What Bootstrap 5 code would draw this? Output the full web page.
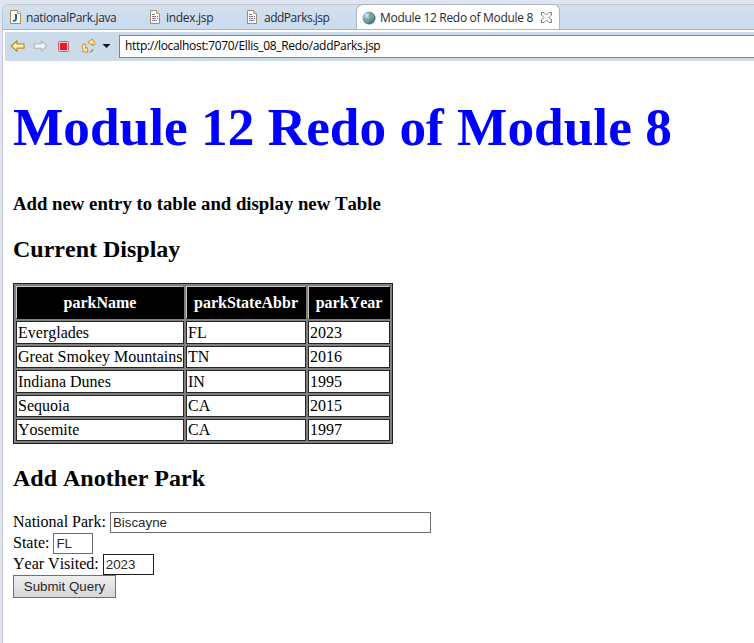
<!DOCTYPE html>
<html lang="en">
<head>
<meta charset="utf-8">
<meta name="viewport" content="width=device-width, initial-scale=1">
<title>Module 12 Redo of Module 8</title>
<link href="https://cdn.jsdelivr.net/npm/bootstrap@5.3.0/dist/css/bootstrap.min.css" rel="stylesheet">
<style>
html, body { height: 100%; }
body { background: #dfe5f3; overflow: hidden; color: #000; padding: 4px 0 0 2px; }
svg { display: block; flex: none; }
.editor { height: 639px; background: #fff; border: solid #c3c6cf; border-width: 1px 0 0 1px; border-top-left-radius: 7px; }
.tabs { height: 25px; background: linear-gradient(#d5e0eb, #cbdcef 60%, #cbdcee); border-bottom: 1px solid #b0b5bd; border-top-left-radius: 6px; font: 12px/24px "Open Sans", "Noto Sans", sans-serif; color: #2b2b33; }
.editor-tab { height: 24px; padding-left: 6px; white-space: nowrap; }
.editor-tab span { padding-top: 2px; }
.editor-tab svg { margin-right: 3px; }
.tab-java { width: 140px; letter-spacing: -.34px; }
.tab-index { width: 97px; letter-spacing: -.3px; }
.tab-add { width: 116px; letter-spacing: -.5px; }
.tab-add svg { margin-right: 4px; }
.tab-active { width: 204px; height: 25px; background: #fff; border: 1px solid #b0b5bd; border-bottom: 0; border-radius: 7px 6px 0 0; margin-top: -1px; padding-left: 5px; letter-spacing: -.31px; color: #1e2a33; }
.tab-active svg { margin-right: 4px; }
.toolbar { height: 29px; margin: 2px 0 0 2px; background: #ccdbea; padding: 0 0 1px 5px; }
.address { height: 23px; background: #fff; border: 1px solid #7b8792; border-right: 0; font: 12px/19px "Open Sans", "Noto Sans", sans-serif; color: #000; padding-left: 5px; letter-spacing: -.32px; white-space: nowrap; }
.page { padding: 37px 0 0 10px; font: 16px/21px "Liberation Serif", "Times New Roman", serif; font-kerning: none; }
.page h1, .page h2, .page h3 { font-weight: 700; margin: 0; white-space: nowrap; }
.page h1 { font-size: 53.3px; line-height: 60px; color: #00f; }
.page h3 { font-size: 18.75px; line-height: 22px; margin-top: 35px; }
.page h2 { font-size: 24px; line-height: 28px; margin-top: 20px; }
.parks { width: 380px; margin-top: 20px; table-layout: fixed; border: 1px solid #202020; border-collapse: separate; border-spacing: 2px; background: #808080; }
.parks th { height: 33px; padding: 0; background: #000; color: #fff; text-align: center; border: 1px solid; border-color: #c8c8c8 #000 #000 #c8c8c8; }
.parks td { height: 22px; padding: 0 0 0 1px; line-height: 20px; background: #fff; border: 1px solid #252525; white-space: nowrap; }
.parks .tall td { height: 23px; line-height: 21px; }
.c-name { width: 168px; } .c-state { width: 120px; } .c-year { width: 82px; }
.entry-form { margin-top: 20px; }
.entry-form label { line-height: 19px; padding-bottom: 2px; }
.field { height: 21px; border: 1px solid #6d6d6d; background: #fff; padding: 0 0 0 2px; font: 13.33px/19px "Liberation Sans", Arial, sans-serif; color: #2a2a2a; border-radius: 0; outline: 0; }
.f-park { width: 321px; } .f-state { width: 40px; } .f-year { width: 51px; border-color: #1c1c1c; }
.submit { width: 103px; height: 23px; border: 1px solid #707070; border-radius: 0; background: linear-gradient(#efefef, #d6d6d6); font: 13.33px/20px "Liberation Sans", Arial, sans-serif; color: #2a2a2a; padding: 0; }
</style>
<script src="https://cdn.jsdelivr.net/npm/bootstrap@5.3.0/dist/js/bootstrap.bundle.min.js"></script>
</head>
<body>
<div class="editor">
  <div class="tabs d-flex overflow-visible">
    <div class="editor-tab tab-java d-flex align-items-center">
      <svg width="14" height="16" viewBox="0 0 14 16"><path d="M1.5 1.5h7l3 3v10h-10z" fill="#f5f9fd" stroke="#a58c50"/><path d="M8.500 1.500v3h3" fill="#ead9a2" stroke="#c3a55a"/><path d="M7 5v5q0 2-3 1.700" fill="none" stroke="#2c5f96" stroke-width="2"/></svg><span>nationalPark.java</span>
    </div>
    <div class="editor-tab tab-index d-flex align-items-center">
      <svg width="14" height="16" viewBox="0 0 14 16"><path d="M1.500 1.500h6l3 3v10h-9z" fill="#fffdf5" stroke="#a58c62"/><path d="M7.500 1.500v3h3" fill="#eadbb2" stroke="#bba36e"/><path d="M3 5.500h3M3 9.500h4M3 11.500h5" stroke="#5c88bd"/><path d="M3 7.500h4" stroke="#c9605d"/><path d="M8 7.500h1M8 9.500h1" stroke="#5c6e9b"/></svg><span>index.jsp</span>
    </div>
    <div class="editor-tab tab-add d-flex align-items-center">
      <svg width="14" height="16" viewBox="0 0 14 16"><path d="M1.500 1.500h6l3 3v10h-9z" fill="#fffdf5" stroke="#a58c62"/><path d="M7.500 1.500v3h3" fill="#eadbb2" stroke="#bba36e"/><path d="M3 5.500h3M3 9.500h4M3 11.500h5" stroke="#5c88bd"/><path d="M3 7.500h4" stroke="#c9605d"/><path d="M8 7.500h1M8 9.500h1" stroke="#5c6e9b"/></svg><span>addParks.jsp</span>
    </div>
    <div class="editor-tab tab-active d-flex align-items-center">
      <svg width="14" height="16" viewBox="0 0 14 16"><defs><radialGradient id="globe" cx=".32" cy=".3" r=".75"><stop offset="0" stop-color="#dcecf0"/><stop offset=".4" stop-color="#7fabc1"/><stop offset="1" stop-color="#336a8c"/></radialGradient></defs><circle cx="7" cy="9" r="6.500" fill="url(#globe)"/><path d="M7 4l3-.5 2.500 3-1 3-3 .500L7 7zM2 10l3-.500 2 2-1 3-2-.500z" fill="#82a66a" opacity=".75"/></svg><span>Module 12 Redo of Module 8</span>
      <svg class="ms-2 me-0" width="11" height="12" viewBox="0 -1 11 12"><path d="M.5.5h2.500L5.500 3 8 .5h2.500V3L8 5.500l2.500 2.500v2.500H8L5.500 8 3 10.500H.5V8L3 5.500.5 3z" fill="#fff" stroke="#6b7076" stroke-width=".9"/></svg>
    </div>
  </div>
  <div class="toolbar d-flex align-items-center">
    <svg width="109" height="20" viewBox="0 0 109 20">
      <path d="M1.300 10L7 4.800v3h7v4.400H7v3z" fill="#fff3b5" stroke="#bd8b24" stroke-width="1.200" stroke-linejoin="round"/>
      <path d="M37 10l-5.700-5.200v3h-7v4.400h7v3z" fill="#edf1f5" stroke="#b3b9be" stroke-width="1.100" stroke-linejoin="round"/>
      <rect x="48.500" y="5.500" width="10" height="10" rx="1" fill="#f7c9cb" stroke="#cf5d65"/><rect x="50" y="7" width="7" height="7" fill="#d91f31"/>
      <path d="M84.800 8.800q1-3.300-2.300-4.500l-.3-1.300-4.400 3.300 4.300 2.800.2-1.600q1 .5.300 2z" fill="#ffe69b" stroke="#bf8d30" stroke-width=".9" stroke-linejoin="round"/>
      <path d="M73.300 7.500q-2.800 3.500.1 6.700l-1 1.500 5.500.5-.8-5-1.200 1.200q-1.400-1.700.1-3.600z" fill="#ffe69b" stroke="#bf8d30" stroke-width=".9" stroke-linejoin="round"/>
      <path d="M79.500 15.800q3 .2 3.300-2.800" fill="none" stroke="#bf8d30" stroke-width="1.300"/>
      <path d="M92.500 8h8l-4 4z" fill="#171717"/>
    </svg>
    <div class="address flex-grow-1">http://localhost:7070/Ellis_08_Redo/addParks.jsp</div>
  </div>
  <main class="page">
    <h1>Module 12 Redo of Module 8</h1>
    <h3>Add new entry to table and display new Table</h3>
    <h2>Current Display</h2>
    <table class="parks">
      <colgroup><col class="c-name"><col class="c-state"><col class="c-year"></colgroup>
      <thead><tr><th>parkName</th><th>parkStateAbbr</th><th>parkYear</th></tr></thead>
      <tbody>
        <tr class="tall"><td>Everglades</td><td>FL</td><td>2023</td></tr>
        <tr><td>Great Smokey Mountains</td><td>TN</td><td>2016</td></tr>
        <tr class="tall"><td>Indiana Dunes</td><td>IN</td><td>1995</td></tr>
        <tr><td>Sequoia</td><td>CA</td><td>2015</td></tr>
        <tr><td>Yosemite</td><td>CA</td><td>1997</td></tr>
      </tbody>
    </table>
    <h2>Add Another Park</h2>
    <form class="entry-form">
      <div class="d-flex gap-1"><label for="park">National Park:</label><input id="park" class="field f-park" type="text" value="Biscayne"></div>
      <div class="d-flex gap-1"><label for="state">State:</label><input id="state" class="field f-state" type="text" value="FL"></div>
      <div class="d-flex gap-1"><label for="year">Year Visited:</label><input id="year" class="field f-year" type="text" value="2023"></div>
      <button class="submit d-block" type="button">Submit Query</button>
    </form>
  </main>
</div>
</body>
</html>
